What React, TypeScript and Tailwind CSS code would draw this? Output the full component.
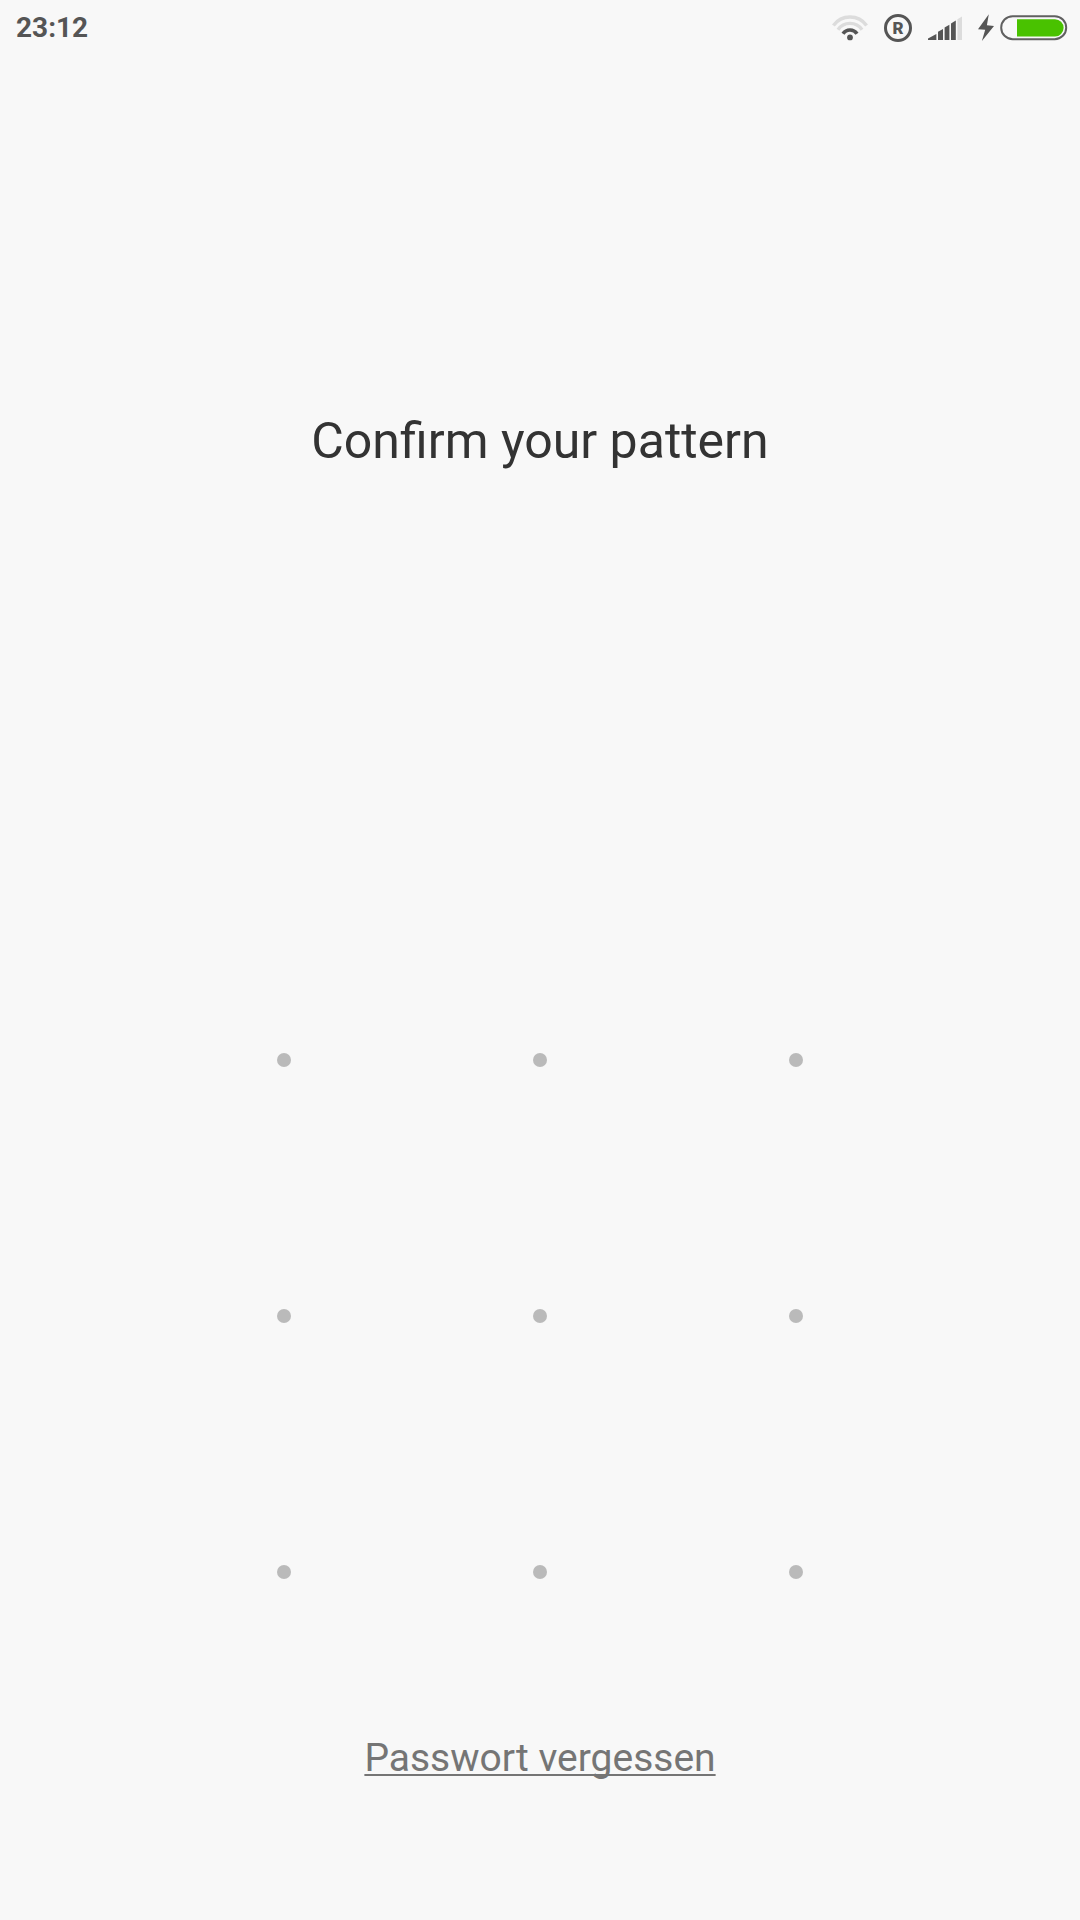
const dots = [1, 2, 3, 4, 5, 6, 7, 8, 9];

function WifiIcon() {
  return (
    <svg width="36" height="26" viewBox="0 0 36 26" fill="none" aria-hidden="true">
      <path d="M1.400 10.400a20.500 20.500 0 0 1 33.200 0" stroke="#dcdcdc" strokeWidth="3.400" />
      <path d="M6 14.700a14.600 14.600 0 0 1 24 0" stroke="#dcdcdc" strokeWidth="3.400" />
      <path d="M11 18.800a8.400 8.400 0 0 1 14 0" stroke="#555555" strokeWidth="3.600" />
      <circle cx="18" cy="22.400" r="2.900" fill="#555555" />
    </svg>
  );
}

function SignalIcon() {
  return (
    <svg width="34" height="24" viewBox="0 0 34 24" fill="#555555" aria-hidden="true">
      <path d="M0 24v-1.600L8.400 18v6z" />
      <path d="M10 24v-8.200l5-2.800v11z" />
      <path d="M16.600 24V11.400L21.400 8.800V24z" />
      <path d="M23 24V7.400L27.800 4.600V24z" />
      <path d="M29.400 24V3.200L34 .4V24z" fill="#dcdcdc" />
    </svg>
  );
}

function BoltIcon() {
  return (
    <svg width="16" height="28" viewBox="0 0 16 28" fill="#555555" aria-hidden="true">
      <path d="M10.800.2 0 15.200l7.200.6L3.900 27 16 12 8.900 11.300z" />
    </svg>
  );
}

function BatteryIcon() {
  return (
    <svg width="68" height="26" viewBox="0 0 68 26" fill="none" aria-hidden="true">
      <rect x="1.200" y="1.200" width="65" height="23" rx="11.500" stroke="#606060" strokeWidth="2" />
      <path d="M17 4.200h38a8.600 8.600 0 0 1 0 17.200H17z" fill="#49c200" />
    </svg>
  );
}

function StatusBar() {
  return (
    <header className="flex h-14 items-center justify-between pr-3 pl-4 text-[#555555]">
      <time className="text-[28px] leading-8 font-bold">23:12</time>
      <div className="flex items-center">
        <WifiIcon />
        <span className="ml-4 flex size-7 items-center justify-center rounded-full border-3 border-[#555555] text-[17px] leading-none font-black">
          R
        </span>
        <span className="ml-4">
          <SignalIcon />
        </span>
        <span className="ml-4">
          <BoltIcon />
        </span>
        <span className="ml-1.5">
          <BatteryIcon />
        </span>
      </div>
    </header>
  );
}

export default function App() {
  return (
    <div className="flex min-h-screen flex-col bg-[#f8f8f8] font-[Roboto,sans-serif]">
      <StatusBar />
      <main className="flex flex-1 flex-col items-center pt-[355px]">
        <h1 className="text-[50px] leading-[60px] text-[#333333]">Confirm your pattern</h1>

        {/* Pattern grid */}
        <div className="mt-auto grid w-full max-w-[768px] grid-cols-3">
          {dots.map((dot) => (
            <button
              key={dot}
              type="button"
              aria-label={`Dot ${dot}`}
              className="flex aspect-square items-center justify-center"
            >
              <span className="size-3.5 rounded-full bg-[#bababa]" />
            </button>
          ))}
        </div>

        <a
          href="#"
          className="mt-[34px] mb-[138px] text-[39px] leading-[48px] text-[#757575] underline decoration-2 underline-offset-3 [text-decoration-skip-ink:none]"
        >
          Passwort vergessen
        </a>
      </main>
    </div>
  );
}
